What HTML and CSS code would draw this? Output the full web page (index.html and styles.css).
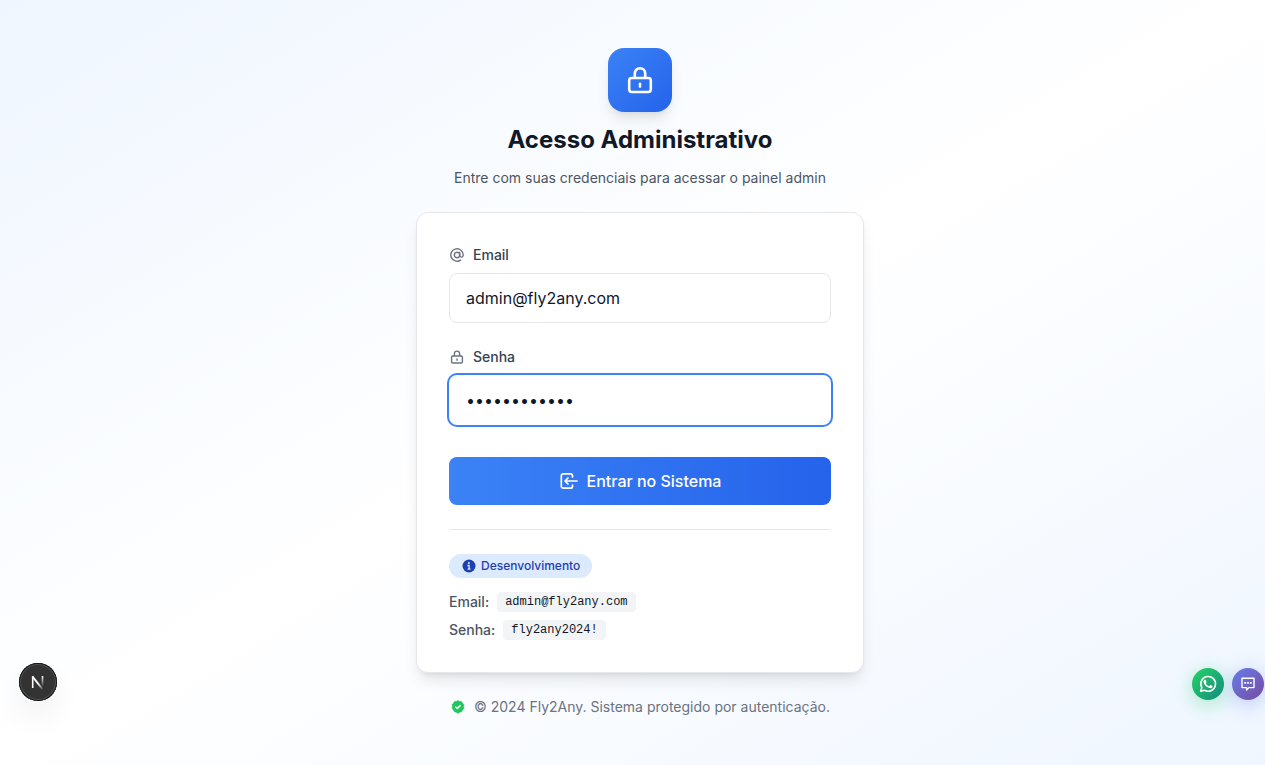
FILE: index.html
```html
<!DOCTYPE html>
<html lang="pt-BR">
<head>
<meta charset="utf-8">
<meta name="viewport" content="width=device-width, initial-scale=1">
<title>Acesso Administrativo</title>
<link rel="stylesheet" href="styles.css">
</head>
<body class="page">
<main class="login">
  <header class="intro">
    <div class="logo">
      <svg width="32" height="32" viewBox="0 0 32 32" fill="none" stroke="#fff" stroke-width="2.6" aria-hidden="true">
        <rect x="5.2" y="14" width="21.6" height="14" rx="2.4"/>
        <path d="M10.8 14V9.4a5.2 5.2 0 0 1 10.4 0V14"/>
        <path d="M16 19.8v2.8" stroke-linecap="round"/>
      </svg>
    </div>
    <h1 class="title">Acesso Administrativo</h1>
    <p class="subtitle">Entre com suas credenciais para acessar o painel admin</p>
  </header>

  <section class="card">
    <form class="form">
      <div class="field">
        <label class="label" for="email">
          <svg width="16" height="16" viewBox="0 0 16 16" fill="none" stroke="#6b7280" stroke-width="1.4" stroke-linecap="round" aria-hidden="true">
            <circle cx="8" cy="8" r="2.7"/>
            <path d="M10.7 5.5v3.2a1.8 1.8 0 0 0 3.5 0V8A6.2 6.2 0 1 0 11.5 13.1"/>
          </svg>
          Email
        </label>
        <input class="input" id="email" type="email" value="admin@fly2any.com">
      </div>
      <div class="field">
        <label class="label" for="password">
          <svg width="16" height="16" viewBox="0 0 32 32" fill="none" stroke="#6b7280" stroke-width="2.8" aria-hidden="true">
            <rect x="5.2" y="14" width="21.6" height="14" rx="2.4"/>
            <path d="M10.8 14V9.4a5.2 5.2 0 0 1 10.4 0V14"/>
            <path d="M16 19.8v2.8" stroke-linecap="round"/>
          </svg>
          Senha
        </label>
        <input class="input input-active" id="password" type="password" value="fly2any2024!">
      </div>
      <button class="submit" type="submit">
        <svg width="20" height="20" viewBox="0 0 20 20" fill="none" stroke="#fff" stroke-width="1.7" stroke-linecap="round" stroke-linejoin="round" aria-hidden="true">
          <path d="M13.5 6V4.8a2 2 0 0 0-2-2H4.3a2 2 0 0 0-2 2v10.4a2 2 0 0 0 2 2h7.2a2 2 0 0 0 2-2V14"/>
          <path d="M18 10H6.4M9 7 6 10l3 3"/>
        </svg>
        Entrar no Sistema
      </button>
    </form>

    <div class="dev">
      <span class="badge">
        <svg width="16" height="16" viewBox="0 0 16 16" aria-hidden="true">
          <circle cx="8" cy="8" r="6.5" fill="#1e40af"/>
          <circle cx="7.8" cy="4.9" r="1" fill="#dbeafe"/>
          <path d="M6.4 7.5h1.7v3.4M6.6 11.2h3" fill="none" stroke="#dbeafe" stroke-width="1.3"/>
        </svg>
        Desenvolvimento
      </span>
      <dl class="creds">
        <div class="cred"><dt class="cred-name">Email:</dt><dd class="cred-value"><code class="code">admin@fly2any.com</code></dd></div>
        <div class="cred"><dt class="cred-name">Senha:</dt><dd class="cred-value"><code class="code">fly2any2024!</code></dd></div>
      </dl>
    </div>
  </section>

  <footer class="footer">
    <svg width="16" height="16" viewBox="0 0 16 16" aria-hidden="true">
      <path d="M8 1.4l1.7 1 1.9.1.9 1.7 1.4 1.4-.3 2 .3 2-1.4 1.4-.9 1.7-1.9.5-1.7 1.2-1.7-1.2-1.9-.5-.9-1.7-1.4-1.4.3-2-.3-2 1.4-1.4.9-1.7 1.9-.1z" fill="#22c55e" stroke="#22c55e" stroke-width=".6" stroke-linejoin="round"/>
      <path d="M5.7 8l1.6 1.5 2.9-2.9" fill="none" stroke="#fff" stroke-width="1.5" stroke-linecap="round" stroke-linejoin="round"/>
    </svg>
    <p class="footer-text">© 2024 Fly2Any. Sistema protegido por autenticação.</p>
  </footer>
</main>

<button class="devtools" type="button" aria-label="Next.js">
  <svg width="38" height="38" viewBox="0 0 38 38" fill="none" aria-hidden="true">
    <defs>
      <linearGradient id="fade-diagonal" gradientUnits="userSpaceOnUse" x1="20" y1="20" x2="25" y2="26"><stop offset="0" stop-color="#fff"/><stop offset="1" stop-color="#fff" stop-opacity="0"/></linearGradient>
      <linearGradient id="fade-stem" gradientUnits="userSpaceOnUse" x1="23" y1="13" x2="23" y2="24"><stop offset="0" stop-color="#fff"/><stop offset="1" stop-color="#fff" stop-opacity="0"/></linearGradient>
    </defs>
    <path d="M13.7 25V13.4" stroke="#fff" stroke-width="1.6"/>
    <path d="M13.4 13.4l10.2 13" stroke="url(#fade-diagonal)" stroke-width="1.8"/>
    <path d="M23.5 13v9.8" stroke="url(#fade-stem)" stroke-width="1.6"/>
  </svg>
</button>

<div class="chat-actions">
  <button class="round whatsapp" type="button" aria-label="WhatsApp">
    <svg width="18" height="18" viewBox="0 0 24 24" fill="#fff" aria-hidden="true">
      <path d="M17.472 14.382c-.297-.149-1.758-.867-2.03-.967-.273-.099-.471-.148-.67.15-.197.297-.767.966-.94 1.164-.173.199-.347.223-.644.075-.297-.15-1.255-.463-2.39-1.475-.883-.788-1.48-1.761-1.653-2.059-.173-.297-.018-.458.13-.606.134-.133.298-.347.446-.52.149-.174.198-.298.298-.497.099-.198.05-.371-.025-.52-.075-.149-.669-1.612-.916-2.207-.242-.579-.487-.5-.669-.51-.173-.008-.371-.01-.57-.01-.198 0-.52.074-.792.372-.272.297-1.04 1.016-1.04 2.479 0 1.462 1.065 2.875 1.213 3.074.149.198 2.096 3.2 5.077 4.487.709.306 1.262.489 1.694.625.712.227 1.36.195 1.871.118.571-.085 1.758-.719 2.006-1.413.248-.694.248-1.289.173-1.413-.074-.124-.272-.198-.57-.347z"/>
      <path d="M2.3 21.7l1.4-5.1a9.8 9.8 0 1 1 3.7 3.7z" fill="none" stroke="#fff" stroke-width="2.1" stroke-linejoin="round"/>
    </svg>
  </button>
  <button class="round chat" type="button" aria-label="Chat">
    <svg width="16" height="16" viewBox="0 0 16 16" fill="none" stroke="#fff" stroke-width="1.4" aria-hidden="true">
      <path d="M2 2.2h12v9.4H8.8L6.6 14v-2.4H2z" stroke-linejoin="round"/>
      <path d="M4.3 6.9h1.8M7.1 6.9h1.8M9.9 6.9h1.8" stroke-width="1.8"/>
    </svg>
  </button>
</div>
</body>
</html>
```

FILE: styles.css
```css
*, *::before, *::after { box-sizing: border-box; }

.page {
  margin: 0;
  min-height: 100vh;
  font-family: Inter, "Liberation Sans", sans-serif;
  font-size: 14px;
  line-height: 20px;
  color: #111827;
  background: linear-gradient(to bottom right, #eff6ff, #ffffff 50%, #eff6ff);
}

.login {
  display: flex;
  flex-direction: column;
  align-items: center;
  padding: 48px 0 48px 15px;
}

.intro {
  display: flex;
  flex-direction: column;
  align-items: center;
  gap: 12px;
  margin-bottom: 24px;
  text-align: center;
}

.logo {
  display: flex;
  align-items: center;
  justify-content: center;
  width: 64px;
  height: 64px;
  border-radius: 16px;
  background: linear-gradient(to bottom right, #3b82f6, #2563eb);
  box-shadow: 0 10px 15px -3px rgba(0, 0, 0, 0.1), 0 4px 6px -4px rgba(0, 0, 0, 0.1);
}

.title {
  margin: 0;
  font-size: 24px;
  line-height: 32px;
  font-weight: 700;
}

.subtitle { margin: 0; font-weight: 380; color: #4b5563; }

.card {
  width: 100%;
  max-width: 448px;
  padding: 32px;
  border: 1px solid #e5e7eb;
  border-radius: 12px;
  background: #fff;
  box-shadow: 0 10px 15px -3px rgba(0, 0, 0, 0.1), 0 4px 6px -4px rgba(0, 0, 0, 0.1);
}

.form {
  display: flex;
  flex-direction: column;
  gap: 24px;
}

.field {
  display: flex;
  flex-direction: column;
  gap: 8px;
}

.label {
  display: flex;
  align-items: center;
  gap: 8px;
  font-weight: 500;
  color: #374151;
}

.input {
  width: 100%;
  height: 50px;
  padding: 12px 16px;
  border: 1px solid #e5e7eb;
  border-radius: 8px;
  background: #fff;
  font: inherit;
  font-size: 16px;
  font-weight: 380;
  line-height: 24px;
  color: #0f172a;
  outline: none;
}

.input-active {
  border-color: transparent;
  box-shadow: 0 0 0 2px #3b82f6;
}

.submit {
  display: flex;
  align-items: center;
  justify-content: center;
  gap: 8px;
  height: 48px;
  margin-top: 8px;
  border: 0;
  border-radius: 8px;
  background: linear-gradient(to right, #3b82f6, #2563eb);
  font: inherit;
  font-size: 16px;
  font-weight: 500;
  color: #fff;
}

.dev {
  margin-top: 24px;
  padding-top: 24px;
  border-top: 1px solid #e5e7eb;
}

.badge {
  display: flex;
  align-items: center;
  gap: 4px;
  width: fit-content;
  height: 24px;
  padding: 0 12px;
  border-radius: 12px;
  background: #dbeafe;
  font-size: 12px;
  font-weight: 500;
  color: #1e40af;
}

.creds {
  display: flex;
  flex-direction: column;
  gap: 8px;
  margin: 14px 0 0;
}

.cred {
  display: flex;
  align-items: center;
  gap: 8px;
}

.cred-name { font-weight: 500; color: #4b5563; }

.cred-value { display: flex; margin: 0; }

.code {
  padding: 2px 8px;
  border-radius: 4px;
  background: #f3f4f6;
  font-family: "Liberation Mono", monospace;
  font-size: 12px;
  line-height: 16px;
  color: #111827;
}

.footer {
  display: flex;
  align-items: center;
  gap: 8px;
  margin-top: 24px;
  color: #6b7280;
}

.footer-text { margin: 0; }

.devtools {
  position: fixed;
  left: 19px;
  bottom: 64px;
  width: 38px;
  height: 38px;
  padding: 0;
  border: 0;
  border-radius: 50%;
  background: #333;
  box-shadow: inset 0 0 0 1px #171717, inset 0 0 0 2px #505050, 0 16px 32px -8px rgba(0, 0, 0, 0.16);
}

.devtools svg { display: block; }

.chat-actions {
  position: fixed;
  right: 1px;
  bottom: 65px;
  display: flex;
  gap: 8px;
}

.round {
  display: flex;
  align-items: center;
  justify-content: center;
  width: 32px;
  height: 32px;
  padding: 0;
  border: 0;
  border-radius: 50%;
}

.whatsapp {
  background: linear-gradient(135deg, #25d366, #128c7e);
  box-shadow: 0 4px 20px rgba(37, 211, 102, 0.4);
}

.chat {
  background: linear-gradient(135deg, #667eea, #764ba2);
  box-shadow: 0 4px 20px rgba(102, 126, 234, 0.4);
}
```
